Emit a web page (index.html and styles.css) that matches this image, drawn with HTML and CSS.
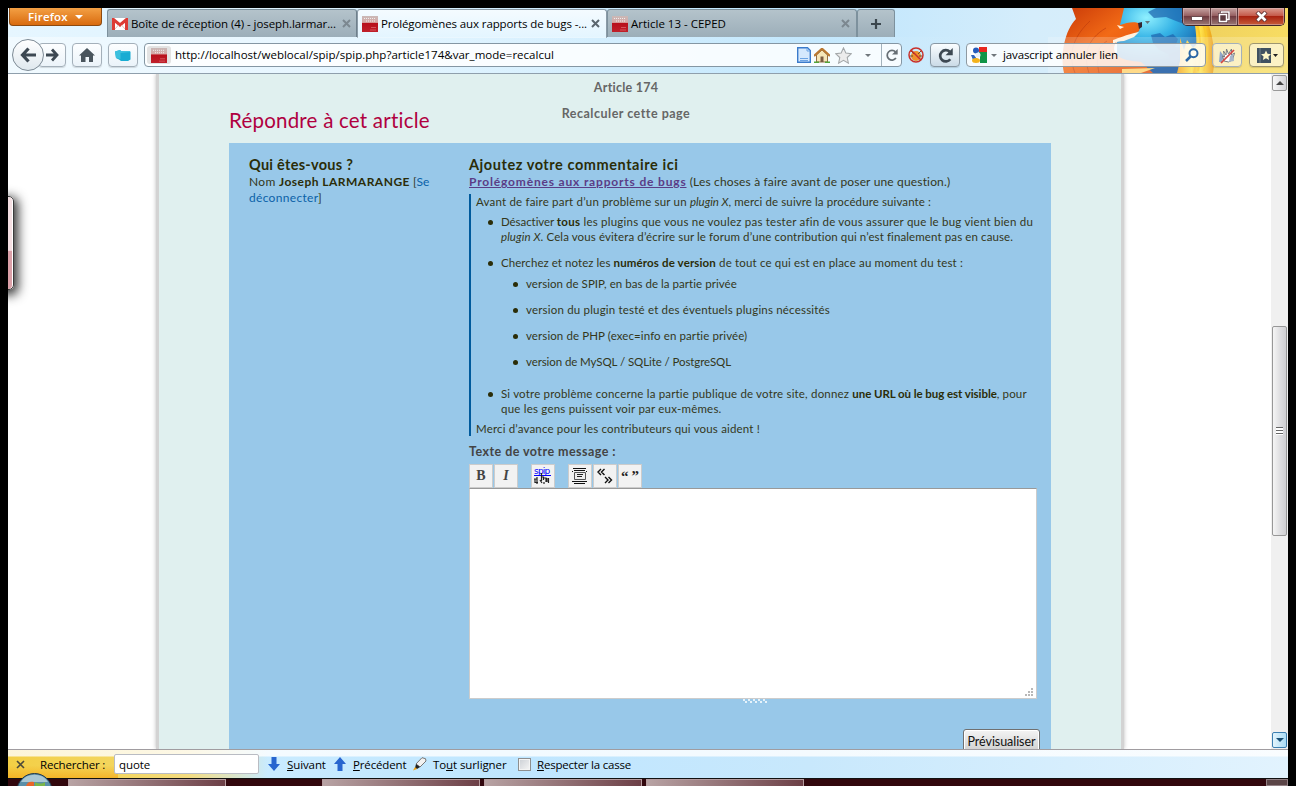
FILE: index.html
```html
<!DOCTYPE html>
<html lang="fr">
<head>
<meta charset="utf-8">
<title>Prolégomènes aux rapports de bugs</title>
<link rel="stylesheet" href="styles.css">
</head>
<body>
<svg class="defs" width="0" height="0">
  <defs>
    <linearGradient id="red" x2="0" y2="1"><stop offset="0" stop-color="#c9b9b7"/><stop offset=".4" stop-color="#d8a8a5"/><stop offset=".46" stop-color="#b8101c"/><stop offset="1" stop-color="#c0202a"/></linearGradient>
    <symbol id="site" viewBox="0 0 16 16"><rect width="16" height="16" fill="url(#red)"/><path d="M2 2.500h12M4 5h9" stroke="#eee" stroke-dasharray="1 1"/><path d="M9 11.500h5M8 14h6" stroke="#d4555d"/></symbol>
    <symbol id="cross" viewBox="0 0 9 9"><path d="M1 1l7 7M8 1l-7 7" stroke="currentColor" stroke-width="2"/></symbol>
    <symbol id="reload" viewBox="0 0 16 16"><path d="M11.600 11.200A5 5 0 1 1 11.500 4.600" fill="none" stroke="currentColor" stroke-width="2.200"/><path d="M13.500 1.500v6.200H7.300z" fill="currentColor"/></symbol>
  </defs>
</svg>
<div class="window">
  <header class="chrome">
    <svg class="persona" width="240" height="65" viewBox="0 0 240 65">
      <defs>
        <linearGradient id="gold" x2="1" y2=".3"><stop offset="0" stop-color="#f6d977" stop-opacity="0"/><stop offset=".35" stop-color="#efd15f"/><stop offset="1" stop-color="#f7dc62"/></linearGradient>
        <radialGradient id="globe" cx=".32" cy=".15" r=".8"><stop offset="0" stop-color="#8ff0ff"/><stop offset=".4" stop-color="#35b3e6"/><stop offset="1" stop-color="#0b4d9c"/></radialGradient>
        <linearGradient id="fur" x2="1" y2="1"><stop offset="0" stop-color="#c93a08"/><stop offset=".45" stop-color="#f26a16"/><stop offset="1" stop-color="#e04c0a"/></linearGradient>
        <linearGradient id="tail" x2="1"><stop offset="0" stop-color="#f4a21a"/><stop offset=".5" stop-color="#ffe24a"/><stop offset="1" stop-color="#e9960f"/></linearGradient>
      </defs>
      <rect x="120" width="120" height="65" fill="url(#gold)"/>
      <g transform="translate(9 0)">
      <path d="M60 0h80l12 30-10 35H60z" fill="url(#globe)"/>
      <path d="M91 4l8-4h30l5 8-10 3 3 5-8-3-10-4-12 1zM94 27l9-2 5 4 8-3 5 5-3 8 9 1 4 5-8 3-3 8-7-3-2-7-9-4-6-7z" fill="#1c63ac" opacity=".7"/>
      <path d="M123 30l4 12 3-10 6 8 8-8 2 12 3 8-5 13h-24l3-12z" fill="url(#tail)"/>
      <path d="M130 0c10 8 12 40 6 65h20c4-19-1-47-12-65z" fill="url(#tail)"/>
      <path d="M141 5c10 18 12 38 6 58M136 3c8 20 9 40 5 60" stroke="#f9c92c" fill="none" stroke-width="2"/>
      <path d="M15 0h52l-4 17c8-3 15-4 21-1l-2 7c-4 3-8 5-13 6-9 2-15 9-10 17 5 6 15 7 25 8l12 11H7C3 46 8 22 19 11z" fill="url(#fur)"/>
      <path d="M32 65c-6-18-2-34 17-45M18 65c-9-22 2-40 15-52M42 65c-3-15-3-25 8-32" stroke="#bb390b" fill="none" opacity=".6"/>
      <path d="M56 32c6-2 12-5 26-8l-5 5-10 4c-5 0-8 1-11 3zM60 17l7 2-4 2z" fill="#fff1dc"/><path d="M81 15l4-1v5l-3 2z" fill="#352530"/>
      <path d="M65 61l33-1-14 5H65z" fill="#ffd16c"/>
      </g>
      <path d="M0 29h240v36H0z" fill="#fff" opacity=".2"/>
      <path d="M97 13h5l-2.500 3z" fill="#60747c"/>
    </svg>
    <div class="tabs">
      <div class="ffbtn"><span class="t l-ff">Firefox</span><i class="tri white"></i></div>
      <div class="tab t1"><svg width="16" height="12" viewBox="0 0 16 12"><path d="M0 0h16v12H0z" fill="#fff"/><path d="M1.500 12V1.500L8 7l6.500-5.500V12" fill="none" stroke="#dd3b35" stroke-width="3"/><path d="M3 11l3.500-4M13 11L9.500 7" stroke="#e5bfbc"/></svg><span class="t l-t1">Boîte de réception (4) - joseph.larmar...</span><svg class="x" width="9" height="9"><use href="#cross"/></svg></div>
      <div class="tab active"><svg width="16" height="16"><use href="#site"/></svg><span class="t l-t2">Prolégomènes aux rapports de bugs -...</span><svg class="x" width="9" height="9"><use href="#cross"/></svg></div>
      <div class="tab t3"><svg width="16" height="16"><use href="#site"/></svg><span class="t">Article 13 - CEPED</span><svg class="x" width="9" height="9"><use href="#cross"/></svg></div>
      <div class="tab plus"><svg width="12" height="12" viewBox="0 0 12 12"><path d="M6 1v10M1 6h10" stroke="#3c474e" stroke-width="2.200"/></svg></div>
      <div class="winbtns"><b class="min"><i></i></b><b class="max"><svg width="12" height="12" viewBox="0 0 12 12"><path d="M3.500 2V1h7.500v7.500H9M1.500 3.500h7v7h-7zM4 6h2v2H4z" fill="none" stroke="#5c3b40" stroke-width="3"/><path d="M3.500 2V1h7.500v7.500H9M1.500 3.500h7v7h-7z" fill="none" stroke="#fff" stroke-width="1.500"/></svg></b><b class="close"><svg width="13" height="11" viewBox="0 0 13 11"><path d="M2 1l9 9M11 1l-9 9" stroke="#6b3838" stroke-width="4.500"/><path d="M2.500 1.500l8 8M10.500 1.500l-8 8" stroke="#fff" stroke-width="2.600"/></svg></b></div>
    </div>
    <div class="nav">
      <div class="back"><svg width="17" height="16" viewBox="0 0 17 16"><path d="M8.500 1.500L2.500 8l6 6.500M3 8h13" fill="none" stroke="#3d4852" stroke-width="3.200"/></svg></div>
      <div class="btn fwd"><svg width="13" height="14" viewBox="0 0 13 14"><path d="M6 1.500L11 7l-5 5.500M0 7h10.500" fill="none" stroke="#3d4852" stroke-width="2.800"/></svg></div>
      <div class="btn home"><svg width="16" height="14" viewBox="0 0 16 14"><path d="M8 0l8 7.500h-2V14h-4V9H6.500v5H2V7.500H0z" fill="#4a555d"/></svg></div>
      <div class="btn skype"><svg width="16" height="13" viewBox="0 0 16 13"><path d="M0 2.500L5 1l1 1h8.500l1 1v7.500L13 12H6l-2-1.500L1 9z" fill="#18acd3"/><path d="M0 2.500L5 1l1 1h8.500l1 1-10 1v6L1 9z" fill="#3cc0de"/></svg></div>
      <div class="url"><span class="ident"><svg width="16" height="15" viewBox="0 0 16 16" preserveAspectRatio="none"><use href="#site"/></svg></span><span class="t l-url">http://localhost/weblocal/spip/spip.php?article174&amp;var_mode=recalcul</span>
        <span class="urlicons">
          <svg width="14" height="16" viewBox="0 0 14 16"><path d="M.7.700h9.800l2.800 2.800v11.800H.7z" fill="#d5e9fd" stroke="#3b7bcb" stroke-width="1.400"/><path d="M10 1v3h3M3 11.500h8M3 13.500h8" fill="none" stroke="#6ca4e4"/></svg>
          <svg width="16" height="15" viewBox="0 0 16 15"><path d="M2.500 7L8 2l5.500 5v7h-11z" fill="#f6e6b8" stroke="#957046"/><path d="M0 8l8-7.300L16 8" fill="none" stroke="#ba7830" stroke-width="2.200"/><path d="M6.500 8.500h3V14h-3z" fill="#7c5c42"/><path d="M0 14.300h5M11 14.300h5" stroke="#52a438" stroke-width="1.700"/></svg>
          <svg width="17" height="17" viewBox="0 0 16 16"><path d="M8 .8l2.200 4.900 5.200.6-3.900 3.600 1.100 5.300L8 12.600l-4.600 2.600 1.100-5.300L.6 6.300l5.200-.6z" fill="#ececec" stroke="#a2a6a8"/></svg>
          <i class="tri grey"></i>
        </span>
        <span class="rl"><svg width="14" height="14" viewBox="0 0 16 16"><path d="M12.500 11.500A5.500 5.500 0 1 1 12 4.500" fill="none" stroke="currentColor" stroke-width="2"/><path d="M14.500 1v6.500H8z" fill="currentColor"/></svg></span></div>
      <svg class="bug" width="16" height="16" viewBox="0 0 16 16"><ellipse cx="8" cy="9" rx="5" ry="5" fill="#ee922d"/><path d="M3 4l3 3M13 4l-3 3M2 9h3M11 9h3" stroke="#6f4b2b"/><circle cx="8" cy="8" r="7" fill="none" stroke="#c9302a" stroke-width="1.500"/><path d="M3 3l10 10" stroke="#c9302a" stroke-width="1.500"/></svg>
      <div class="btn big"><svg width="17" height="17" viewBox="0 0 16 16"><path d="M12.500 11.500A5.300 5.300 0 1 1 12 4.500" fill="none" stroke="currentColor" stroke-width="2.500"/><path d="M14.800 1v6.800H8z" fill="currentColor"/></svg></div>
      <div class="search"><svg width="16" height="16" viewBox="0 0 16 16"><rect width="16" height="16" fill="#fff"/><path d="M8 0h8v5H8z" fill="#e8281f"/><path d="M8 5h8v11H9V9z" fill="#109447"/><path d="M0 8h3l3 4-4 1z" fill="#3266bd"/><circle cx="5" cy="3.500" r="3" fill="#245bbb"/><circle cx="7" cy="8" r="2.500" fill="#e9f0fc"/><ellipse cx="5" cy="13.500" rx="4" ry="2.500" fill="#f3b21b"/></svg><i class="tri grey"></i><span class="t l-js">javascript annuler lien</span><svg class="mag" width="14" height="14" viewBox="0 0 14 14"><circle cx="8.500" cy="5.300" r="4" fill="#fff" fill-opacity=".5" stroke="#2b66a5" stroke-width="2"/><path d="M5.500 8.500L1 13" stroke="#2b66a5" stroke-width="2.500"/></svg></div>
      <div class="btn hand"><svg width="18" height="17" viewBox="0 0 18 17"><path d="M1 15L2 4l4 5-2 6z" fill="#8fa5c6"/><path d="M6 14L4.500 9l2 1-1-6 2.500 4 .5-6 2 5 3-5v6l3-2-2 7-4 2z" fill="#fff" stroke="#777b80"/><path d="M12 9l3-2 1 7-5 1z" fill="#a6b5ca"/><path d="M3 16L16 3" stroke="#d44743" stroke-width="1.700"/></svg></div>
      <div class="btn mark"><svg width="22" height="15" viewBox="0 0 22 15"><path d="M1 0h14v15H1z" fill="#405160"/><path d="M4 0v15" stroke="#72828c"/><path d="M10 2.500l1.500 3.300 3.500.4-2.600 2.400.7 3.500-3.100-1.800-3.100 1.800.7-3.500L5 6.200l3.500-.4z" fill="#fff7c8"/><path d="M17 6h5l-2.500 3z" fill="#222"/></svg></div>
    </div>
  </header>
  <main class="view">
    <div class="drawer"></div>
    <div class="page">
      <div class="admin"><span class="t l-a">Article 174</span><span class="t l-b">Recalculer cette page</span></div>
      <h1><span class="t l-h">Répondre à cet article</span></h1>
      <div class="form">
        <aside>
          <h2><span class="t l-q">Qui êtes-vous ?</span></h2>
          <p><span class="t l-n1">Nom </span><b class="t l-n2">Joseph LARMARANGE</b><span class="t"> [<a>Se</a></span></p>
          <p><span class="t l-n1"><a>déconnecter</a>]</span></p>
        </aside>
        <section>
          <h2><span class="t l-aj">Ajoutez votre commentaire ici</span></h2>
          <p><b class="t link l-p1">Prolégomènes aux rapports de bugs</b><span class="t l-p2"> (Les choses à faire avant de poser une question.)</span></p>
          <blockquote>
            <p><span class="t l-c1">Avant de faire part d’un problème sur un </span><em class="t l-c2">plugin X</em><span class="t l-c3">, merci de suivre la procédure suivante :</span></p>
            <ul>
              <li><div><span class="t l-d1">Désactiver </span><b class="t l-d2">tous</b><span class="t l-d3"> les plugins que vous ne voulez pas tester afin de vous assurer que le bug vient bien du</span><br><em class="t l-c3">plugin X</em><span class="t l-d5">. Cela vous évitera d’écrire sur le forum d’une contribution qui n’est finalement pas en cause.</span></div></li>
              <li class="second"><div><span class="t l-e1">Cherchez et notez les </span><b class="t l-e2">numéros de version</b><span class="t l-e3">&nbsp;de tout ce qui est en place au moment du test :</span>
                <ul>
                  <li><span class="t l-f1">version de SPIP, en bas de la partie privée</span></li>
                  <li><span class="t l-f2">version du plugin testé et des éventuels plugins nécessités</span></li>
                  <li><span class="t l-c3">version de PHP (exec=info en partie privée)</span></li>
                  <li><span class="t l-f4">version de MySQL / SQLite / PostgreSQL</span></li>
                </ul></div></li>
              <li class="third"><div><span class="t l-g1">Si votre problème concerne la partie publique de votre site, donnez </span><b class="t l-g2">une URL où le bug est visible</b><span class="t l-e2">, pour</span><br><span class="t l-g4">que les gens puissent voir par eux-mêmes.</span></div></li>
            </ul>
            <p class="thanks"><span class="t l-m">Merci d’avance pour les contributeurs qui vous aident !</span></p>
          </blockquote>
          <label><span class="t l-tx">Texte de votre message :</span></label>
          <div class="tools">
            <span class="tool serif">B</span><span class="tool serif it">I</span>
            <span class="tool gap"><svg width="18" height="20" viewBox="0 0 18 20"><text x="0" y="8" class="spip">spip</text><path d="M0 9.500h17" stroke="#00f"/><path d="M7.500 7v8M7.500 11h2v3M10 12h2v4M13 12v4M6 14l2 3M3 11v7M0 13h3M1 13v3.500h3M10 18v-2M14.500 12v5" fill="none" stroke="#222" stroke-width="1.200"/></svg></span>
            <span class="tool gap"><svg width="16" height="16" viewBox="0 0 16 16"><path d="M1 .5h13M0 3.500h1M14 3.500h1M0 13.500h15M2 15.500h11M2 2.500h11" stroke="#111"/><path d="M2.500 4.500h11v7h-11z" fill="#eee" stroke="#555"/><path d="M5 6.500h6M5 8.500h5" stroke="#222"/></svg></span>
            <span class="tool"><svg width="16" height="16" viewBox="0 0 16 16"><path d="M4 1L1 4l3 3M7.500 1l-3 3 3 3M8 9l3 3-3 3M11.500 9l3 3-3 3" fill="none" stroke="#111" stroke-width="1.400"/></svg></span>
            <span class="tool quotes">“&thinsp;”</span>
          </div>
          <div class="area"><svg class="grip" width="8" height="8" viewBox="0 0 8 8"><path d="M6 0h2v2H6zM3 3h2v2H3zM6 3h2v2H6zM0 6h2v2H0zM3 6h2v2H3zM6 6h2v2H6z" fill="#b8b8b8"/></svg></div>
          <svg class="handle" width="24" height="5" viewBox="0 0 24 5"><path d="M0 1h24M2 3h22" stroke="#fff" stroke-width="1.500" stroke-dasharray="2 3"/></svg>
          <div class="send"><button><span class="t l-pv">Prévisualiser</span></button></div>
        </section>
      </div>
    </div>
    <div class="scroll"><i class="sb"><u class="up"></u></i><i class="thumb"><s></s></i><i class="sb blue"><u class="down"></u></i></div>
  </main>
  <footer class="find">
    <svg class="fx" width="9" height="9" viewBox="0 0 9 9"><path d="M1 1l7 7M8 1l-7 7" stroke="#4c4a3a" stroke-width="1.600"/></svg>
    <span class="t f1">Rechercher :</span>
    <span class="input"><span class="t l-t2">quote</span></span>
    <svg class="ar" width="12" height="14" viewBox="0 0 12 14"><path d="M3.500 0h5v7H12l-6 7-6-7h3.500z" fill="#2765cf"/></svg>
    <span class="t f2"><u>S</u>uivant</span>
    <svg class="ar2" width="12" height="14" viewBox="0 0 12 14"><path d="M3.500 14h5V7H12L6 0 0 7h3.500z" fill="#2765cf"/></svg>
    <span class="t f3"><u>P</u>récédent</span>
    <svg class="pen" width="14" height="14" viewBox="0 0 14 14"><path d="M3 7l6-6.300 3.500 1L13 4 7 10z" fill="#f2f2f2" stroke="#777"/><path d="M3 7l4 3-3 2-2-1z" fill="#222"/><path d="M2 10l2 2-4 1.500z" fill="#f0a010"/></svg>
    <span class="t f4">To<u>u</u>t surligner</span>
    <span class="cb"></span>
    <span class="t f5"><u>R</u>especter la casse</span>
  </footer>
  <div class="task">
    <svg class="orb" width="40" height="13" viewBox="0 0 40 13"><circle cx="18.500" cy="18" r="17.500" fill="#5b8fa8" stroke="#24394a"/><path d="M5 9a15 13 0 0 1 27 0z" fill="#a9c7d4"/><path d="M10 13c1-4 4-5 8-4v4z" fill="#e8662a"/><path d="M19 9c4 2 7 2 10 0v4H19z" fill="#7ab648"/></svg>
    <i></i><i></i><i></i><i></i><b></b>
  </div>
</div>
</body>
</html>
```
FILE: styles.css
```css
* { box-sizing: border-box; }
body { margin: 0; height: 786px; overflow: hidden; background: #000; padding: 8px 8px 0; font: 11.5px "Open Sans", sans-serif; color: #000; }
svg { display: block; flex: none; }
.defs { position: absolute; }
h1, h2, p, ul, blockquote { margin: 0; padding: 0; font-weight: normal; }
.t { white-space: pre; }
.window { width: 1280px; height: 778px; display: flex; flex-direction: column; background: #fff; }

/* Tracking of individual labels and text runs */
.l-ff { letter-spacing: .2px; }
.l-t1 { letter-spacing: -.075px; }
.l-t2 { letter-spacing: -.105px; }
.l-url { letter-spacing: .02px; }
.l-js { letter-spacing: -.133px; }
.l-a { letter-spacing: .23px; }
.l-b { letter-spacing: .493px; }
.l-h { letter-spacing: .22px; }
.l-q { letter-spacing: .27px; }
.l-n1 { letter-spacing: .31px; }
.l-n2 { letter-spacing: .476px; }
.l-aj { letter-spacing: .56px; }
.l-p1 { letter-spacing: .822px; }
.l-p2 { letter-spacing: .158px; }
.l-c1 { letter-spacing: .197px; }
.l-c2 { letter-spacing: -.033px; }
.l-c3 { letter-spacing: .102px; }
.l-d1 { letter-spacing: -.068px; }
.l-d2 { letter-spacing: .277px; }
.l-d3 { letter-spacing: .225px; }
.l-d5 { letter-spacing: .109px; }
.l-e1 { letter-spacing: .059px; }
.l-e2 { letter-spacing: .145px; }
.l-e3 { letter-spacing: .163px; }
.l-f1 { letter-spacing: .049px; }
.l-f2 { letter-spacing: .191px; }
.l-f4 { letter-spacing: -.088px; }
.l-g1 { letter-spacing: .179px; }
.l-g2 { letter-spacing: -.063px; }
.l-g4 { letter-spacing: .215px; }
.l-m { letter-spacing: .174px; }
.l-tx { letter-spacing: .453px; }
.l-pv { letter-spacing: -.054px; }

/* Browser chrome */
.chrome { position: relative; height: 66px; flex: none; border-bottom: 1px solid #8f9fac; background: linear-gradient(90deg, #e6f6ff 0, #d9f1ff 30%, #bde5fd 62%, #d5edfb 80%, #dceefa 100%); }
.persona { position: absolute; right: 0; top: 0; }
.tabs { position: relative; height: 29px; display: flex; align-items: flex-start; }
.ffbtn { width: 93px; height: 18px; margin: 0 5px 0 1px; border: 1px solid #8c4a10; border-top: 0; border-radius: 0 0 4px 4px; background: linear-gradient(#f3a044, #d96b0f); color: #fff; font-weight: 600; display: flex; align-items: center; padding-left: 18px; gap: 7px; }
.tri { width: 0; height: 0; border: 4px solid transparent; border-bottom: 0; flex: none; }
.tri.white { border-top: 4px solid #fff; }
.tri.grey { border-width: 3px 3px 0; border-top-color: #70777c; }
.tab { width: 250px; height: 28px; margin-top: 1px; border: 1px solid #7d919d; border-bottom: 0; border-radius: 3px 3px 0 0; background: linear-gradient(#b4c3cb, #9caeb9); display: flex; align-items: center; gap: 3px; padding: 0 6px 0 4px; }
.tab .x { margin-left: auto; color: #7c8890; }
.tab.t1 { border-right-color: #6e808c; padding-right: 5px; }
.tab.active { background: linear-gradient(#f4fbff, #e3f5ff); height: 29px; width: 250px; border-color: #8b9ba7; padding: 0 6px 1px 4px; }
.active .x { color: #5b666e; }
.tab.t3 { width: 250px; }
.tab.plus { width: 38px; padding: 0; justify-content: center; }
.winbtns { margin-left: auto; margin-right: 3px; width: 103px; height: 18px; display: flex; border: 1px solid #42262a; border-top: 0; border-radius: 0 0 5px 5px; overflow: hidden; }
.winbtns b { display: flex; align-items: center; justify-content: center; background: linear-gradient(#c7a4a2, #966062 45%, #713b40 50%, #9b7a76); border-right: 1px solid #593438; box-shadow: inset 0 0 0 1px #d5babb88; }
.min { width: 28px; }
.max { width: 27px; }
.winbtns .close { flex: 1; border: 0; background: linear-gradient(#dc9c90, #c55b4b 45%, #a92311 50%, #c75c3a); }
.min i { width: 12px; height: 5px; background: #fff; border: 1px solid #6a4b4e; margin-top: 3px; }
.nav { position: relative; height: 36px; display: flex; align-items: center; background: linear-gradient(90deg, #ffffff70, #ffffff00 1000px); }
.btn { height: 24px; border: 1px solid #a4b0ba; border-radius: 4px; background: linear-gradient(#ffffffdd, #e9f0f6aa); display: flex; align-items: center; justify-content: center; box-shadow: 0 1px 1px #0002; }
.back { z-index: 1; width: 32px; height: 32px; margin-left: 4px; border: 1px solid #7d8a95; border-radius: 50%; background: linear-gradient(#fff, #dfe8ee); display: flex; align-items: center; justify-content: center; }
.fwd { width: 28px; margin-left: -6px; }
.home, .skype { width: 30px; margin-left: 6px; }
.url { width: 758px; height: 24px; margin-left: 6px; border: 1px solid #8496a3; border-radius: 4px; background: #ffffffd8; display: flex; align-items: center; }
.url > .t, .search > .t { padding-bottom: 1px; }
.ident { width: 24px; height: 18px; margin: 0 4px 0 2px; background: #e3e3e3; border-radius: 3px; display: flex; align-items: center; justify-content: center; }
.urlicons { margin-left: auto; display: flex; align-items: center; gap: 3px; }
.urlicons svg + svg + svg { margin-left: 2px; }
.urlicons .tri { margin: 0 10px 0 10px; }
.rl { width: 20px; height: 22px; border-left: 1px solid #a3b2bc; display: flex; align-items: center; justify-content: center; color: #676f75; }
.bug { margin-left: 6px; }
.big { width: 30px; margin-left: 6px; color: #3d4852; border-color: #8998a4; background: linear-gradient(#fafdff, #cbdbe7); }
.search { width: 240px; height: 24px; margin-left: 6px; border: 1px solid #8e9aa2; border-radius: 4px; background: #ffffffd0; display: flex; align-items: center; padding: 0 6px 0 4px; }
.search .tri { margin: 0 6px 0 4px; }
.mag { margin-left: auto; }
.hand { width: 30px; margin-left: 6px; background: #fff8; }
.mark { width: 35px; margin-left: 7px; background: #fff8; border-color: #9e9670; }

/* Page */
.view { position: relative; height: 675px; flex: none; overflow: hidden; background: #fff; display: flex; font: 11.5px/15px Lato, sans-serif; color: #34371a; }
.drawer { position: absolute; left: -10px; top: 122px; width: 16px; height: 94px; border: 1px solid #3a3a3a; border-radius: 5px; background: linear-gradient(#f4dfe2 58%, #dba0a8 59%); box-shadow: inset -1px 0 #fff, 2px 3px 11px 2px #333; }
.page { width: 968px; margin-left: 148px; flex: none; border: solid #d3d3d3; border-width: 0 3px; background: #e0f0ef; box-shadow: 0 0 4px #bbb; padding: 0 70px; }
.admin { display: flex; flex-direction: column; align-items: center; padding-top: 6px; width: 794px; line-height: 16px; gap: 10px; font-weight: bold; color: #666; font-size: 12.5px; }
h1 { font-size: 20.5px; line-height: 26px; color: #b00040; margin-top: -15px; }
.form { margin-top: 10px; height: 620px; background: #98c8e9; display: flex; padding: 14px 14px 0 20px; }
aside { width: 220px; flex: none; }
.form p { line-height: 16px; font-size: 12px; }
section { width: 568px; flex: none; display: flex; flex-direction: column; }
h2 { font-size: 14.5px; line-height: 16px; font-weight: bold; margin-bottom: 1px; color: #2b2d08; }
b { color: #2b2d08; }
a { color: #0b62a8; }
.link { color: #5b3d86; text-decoration: underline; }
blockquote { margin-top: 4px; height: 242px; border-left: 2px solid #005a9c; padding-left: 5px; }
.form blockquote p { font-size: 11.5px; }
ul { list-style: none; padding: 4px 0 0 12px; }
li { display: flex; }
li::before { content: ""; width: 5px; height: 5px; margin: 6px 8px 0 0; border-radius: 50%; background: #2b2d08; flex: none; }
li + .second { margin-top: 11px; }
li ul { padding-top: 6px; }
li li + li { margin-top: 11px; }
li + .third { margin-top: 17px; }
.thanks { margin-top: 5px; }
label { margin-top: 8px; line-height: 16px; font-weight: bold; font-size: 12.5px; color: #444; }
.tools { display: flex; margin-top: 4px; gap: 1px; height: 24px; }
.tool { width: 24px; height: 24px; background: #f2f2f2; border: 1px solid #ccc; display: flex; align-items: center; justify-content: center; }
.gap { margin-left: 12px; }
.serif { font: bold 14px "Liberation Serif", serif; color: #444; }
.it { font-style: italic; }
.spip { font: 9px "DejaVu Sans", sans-serif; fill: #00f; letter-spacing: -.8px; }
.quotes { font: bold 15px "Liberation Serif", serif; color: #222; padding-top: 1px; }
.area { position: relative; height: 211px; background: #fff; border: 1px solid #ccc; border-top: 1px solid #999; }
.grip { position: absolute; right: 3px; bottom: 2px; }
.handle { margin: 0 0 0 274px; }
.send { display: flex; justify-content: flex-end; margin: 25px -3px 0 0; }
button { width: 77px; height: 24px; padding: 0; border: 1px solid #707070; border-radius: 3px; background: linear-gradient(#f4f4f4, #cfcfcf); box-shadow: inset 0 0 0 1px #fff; font: 12.5px Lato, sans-serif; color: #111; }
.scroll { margin-left: auto; width: 17px; height: 675px; background: #f0f0f0; display: flex; flex-direction: column; align-items: center; }
.sb { width: 15px; height: 16px; margin-top: 1px; border: 1px solid #999; border-radius: 2px; background: linear-gradient(90deg, #f8f8f8, #d4d4d8); display: flex; align-items: center; justify-content: center; }
.sb u { border: 4px solid transparent; }
.sb .up { border-top: 0; border-bottom-color: #444; }
.sb .down { border-bottom: 0; border-top-color: #174d73; }
.sb.blue { margin-top: auto; margin-bottom: 1px; border-color: #3c7fb1; background: linear-gradient(90deg, #e3f4fc, #a9dbf5); }
.thumb { width: 15px; height: 210px; margin-top: 235px; border: 1px solid #979797; border-radius: 2px; background: linear-gradient(90deg, #f5f5f5, #e0e0e2 50%, #cfcfd2); display: flex; align-items: center; justify-content: center; }
.thumb s { width: 7px; height: 8px; background: repeating-linear-gradient(#666 0 1px, #fff 1px 3px); }

/* Find bar */
.find { height: 29px; flex: none; border-top: 1px solid #a09ca0; background: linear-gradient(#fffc 0 6px, #fff0 7px), linear-gradient(#f5ad1e00 55%, #f5ad1ecc) 0 0 / 110px 100% no-repeat, linear-gradient(90deg, #f3cf45 0, #f3d55c 100px, #f4dc80 180px, #c9ebff 260px, #bfe6ff 500px, #c8e8fc 800px, #e2f3fe 1280px); display: flex; align-items: center; padding-left: 8px; }
.f1 { width: 65px; margin: 0 9px 0 15px; letter-spacing: -.15px; }
.input { width: 145px; height: 20px; border: 1px solid #b9bcc3; border-radius: 2px; background: #fff; padding-left: 4px; display: flex; align-items: center; }
.ar { margin: 0 7px 0 9px; }
.f2 { width: 39px; letter-spacing: -.1px; }
.ar2 { margin: 0 7px 0 8px; }
.f3 { width: 53px; letter-spacing: -.15px; }
.pen { margin: 0 6px 0 7px; }
.f4 { width: 74px; letter-spacing: -.1px; }
.f5 { letter-spacing: -.217px; }
.cb { width: 13px; height: 13px; margin: 0 6px 0 11px; border: 1px solid #8e8f8f; background: linear-gradient(135deg, #cbcfd5, #f6f6f6); box-shadow: inset 0 0 0 1px #f4f4f4; }

/* Taskbar */
.task { position: relative; height: 8px; flex: none; background: #32070d; border-top: 1px solid #111; display: flex; gap: 4px; padding-left: 60px; }
.orb { position: absolute; left: 8px; bottom: 0; }
.task i { width: 158px; height: 8px; border: 1px solid #b69b9e; background: linear-gradient(90deg, #b8a3a4, #6d4047); }
.task i:nth-of-type(2) { margin-left: 92px; }
.task b { margin-left: auto; width: 22px; background: #5b4547; border: 1px solid #928084; }
```
